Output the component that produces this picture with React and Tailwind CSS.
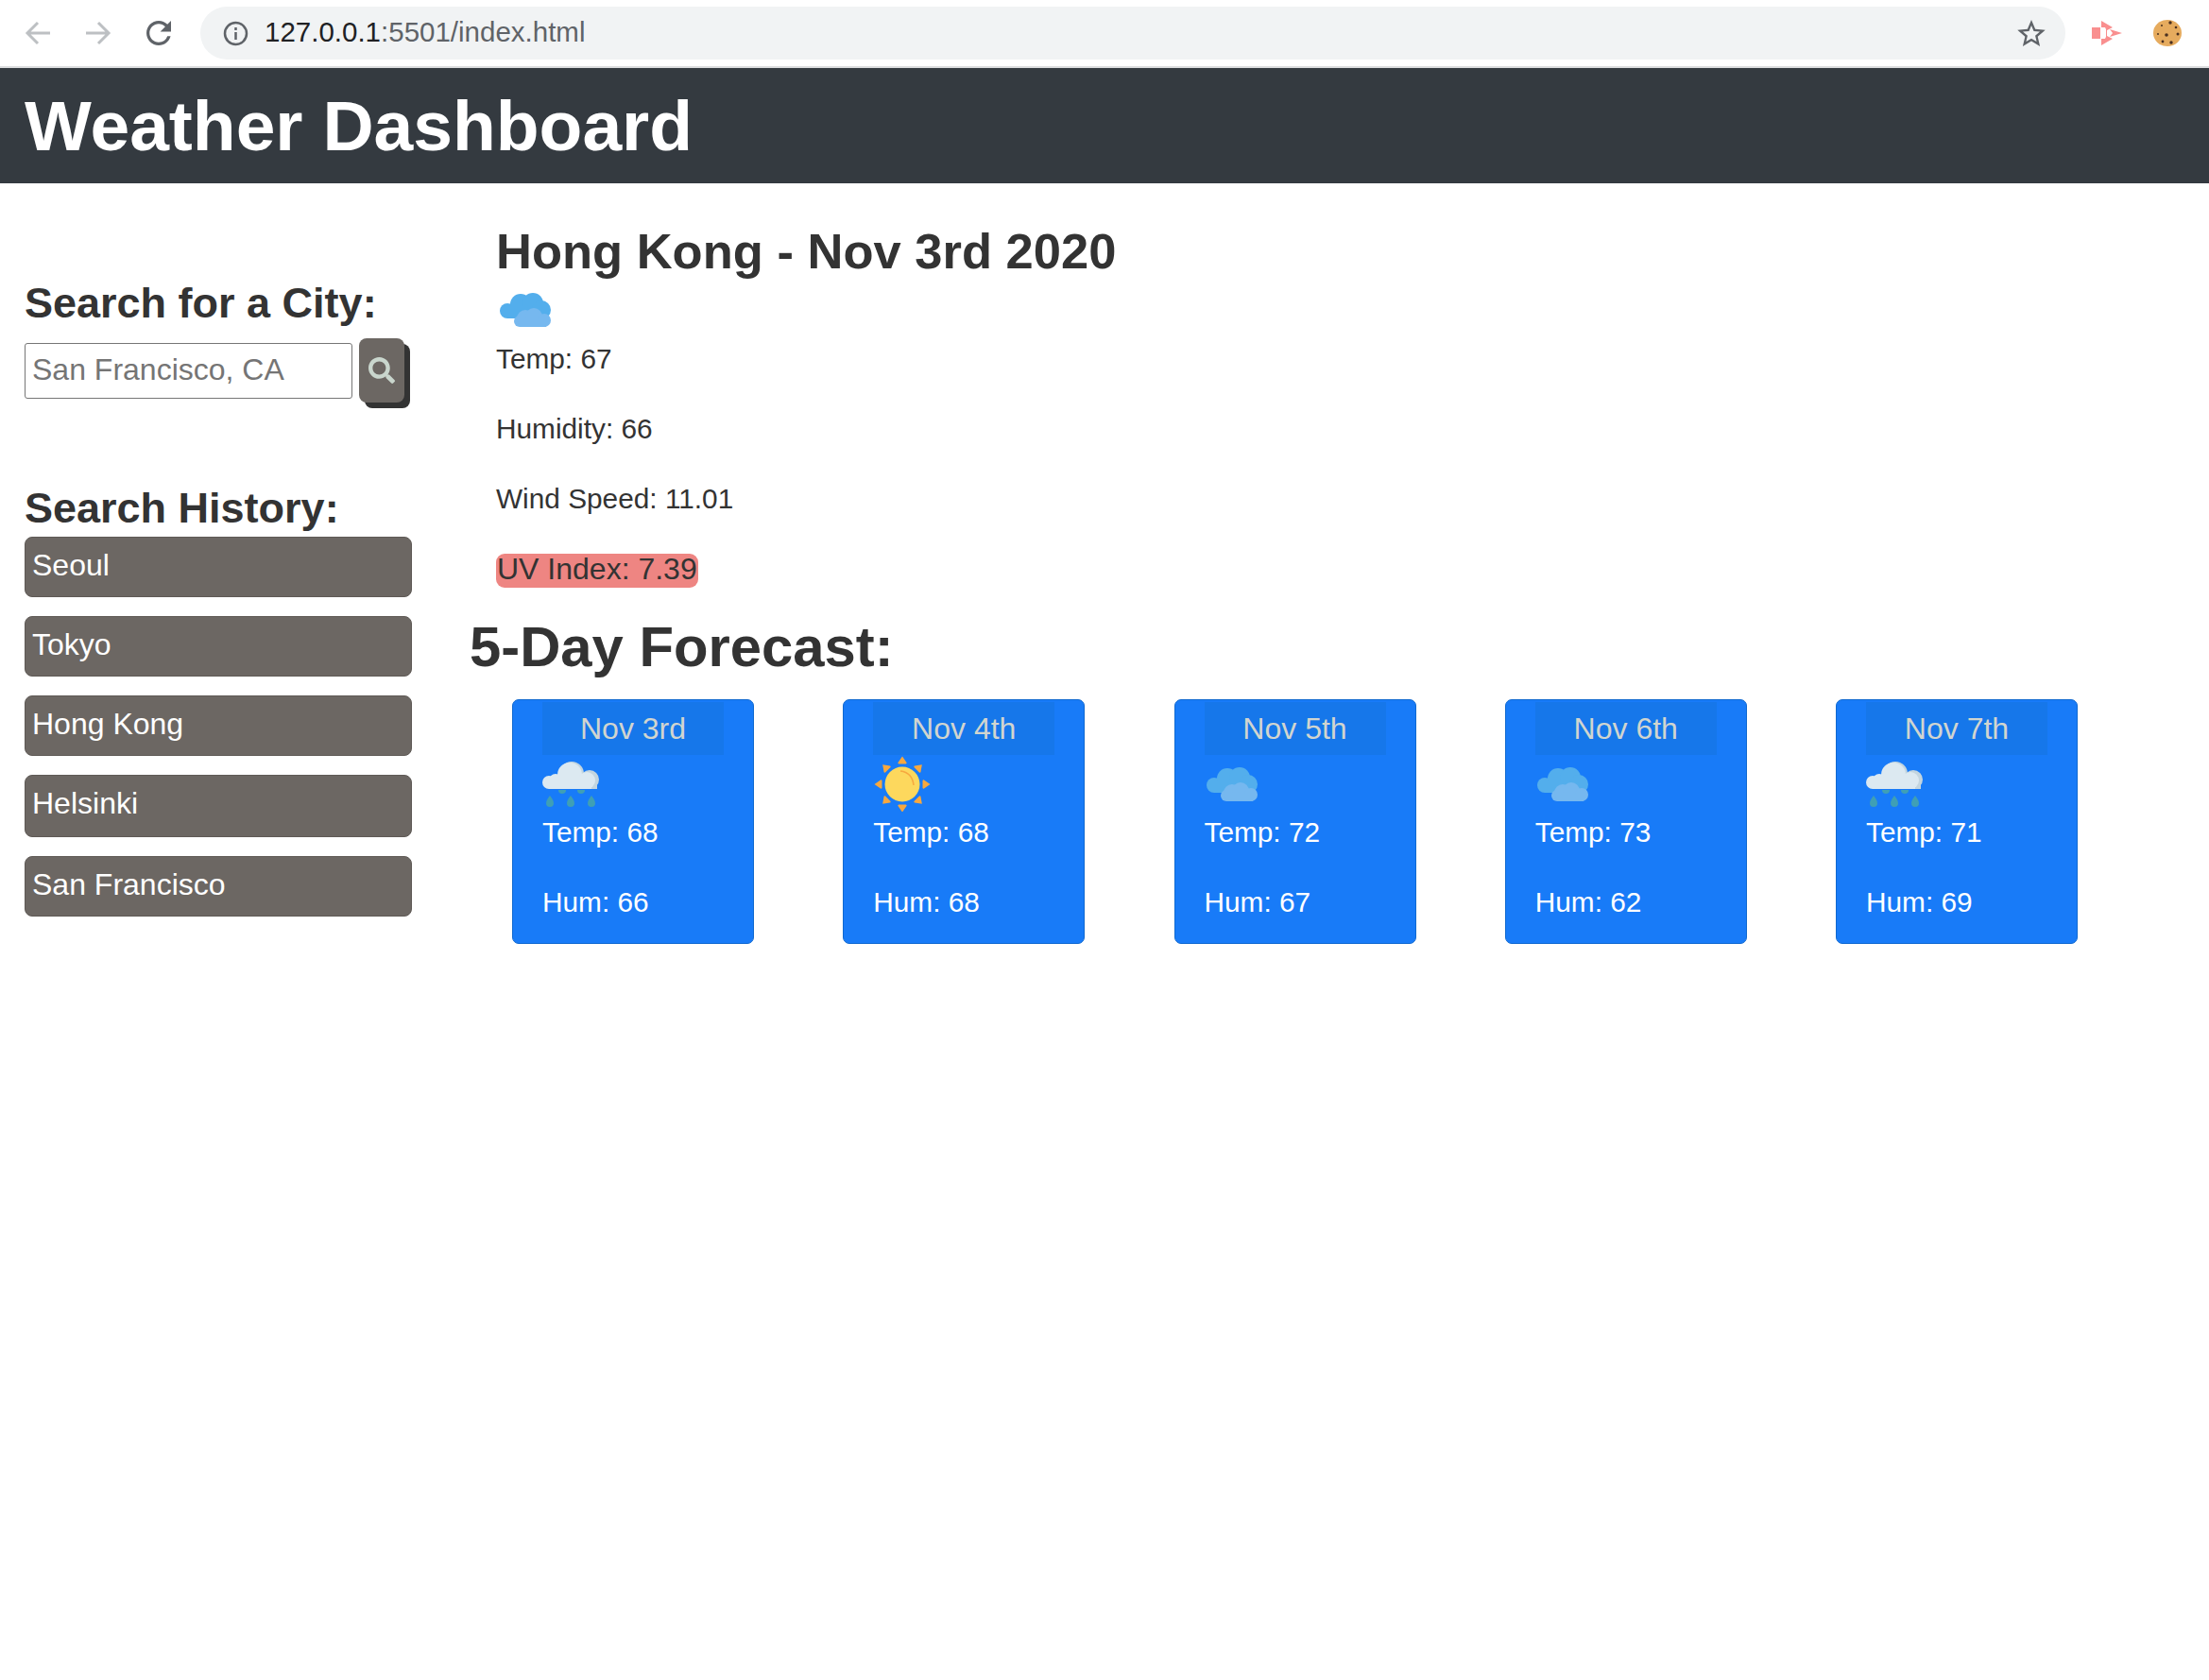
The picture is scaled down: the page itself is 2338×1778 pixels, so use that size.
import { FaSearch } from "react-icons/fa";

const history = [
  { name: "Seoul", size: "h-[64px] pb-[4px]" },
  { name: "Tokyo", size: "h-[64px] pb-[4px]" },
  { name: "Hong Kong", size: "h-[64px] pb-[4px]" },
  { name: "Helsinki", size: "h-[66px] pb-[7px]" },
  { name: "San Francisco", size: "h-[64px] pb-[4px]" },
];

const forecast = [
  { date: "Nov 3rd", icon: "rain", temp: 68, hum: 66 },
  { date: "Nov 4th", icon: "sun", temp: 68, hum: 68 },
  { date: "Nov 5th", icon: "clouds", temp: 72, hum: 67 },
  { date: "Nov 6th", icon: "clouds", temp: 73, hum: 62 },
  { date: "Nov 7th", icon: "rain", temp: 71, hum: 69 },
];

const CloudsIcon = ({ className }) => (
  <svg width="54" height="36" viewBox="0 0 54 36" className={className}>
    <g fill="#53aeec">
      <circle cx="8" cy="19" r="8" />
      <circle cx="22" cy="12" r="11" />
      <circle cx="35" cy="11" r="11" />
      <circle cx="44" cy="18" r="10" />
      <rect x="8" y="15" width="38" height="12" />
    </g>
    <g fill="#76b8ef">
      <circle cx="21" cy="30" r="6" />
      <circle cx="27" cy="27" r="9" />
      <circle cx="36" cy="25" r="9" />
      <circle cx="47" cy="29" r="7" />
      <rect x="21" y="28" width="28" height="8" />
    </g>
  </svg>
);

const RainIcon = () => (
  <svg width="62" height="60" viewBox="0 0 62 60" className="block">
    <g fill="#c3d5df">
      <circle cx="31" cy="20" r="13" />
      <circle cx="50" cy="26" r="10" />
      <rect x="8" y="26" width="50" height="10" />
    </g>
    <g fill="#dce9f1">
      <circle cx="29" cy="21" r="13" />
      <circle cx="47" cy="27" r="9" />
      <circle cx="7" cy="29" r="7" />
      <circle cx="14" cy="27" r="7" />
      <rect x="7" y="26" width="45" height="10" />
    </g>
    <g fill="#3f9fb5">
      <path d="M17 37h8a4 4 0 0 1-8 0z" />
      <path d="M37 37h8a4 4 0 0 1-8 0z" />
      <path d="M8 43c2 3 4 5 4 8a4 4 0 0 1-8 0c0-3 2-5 4-8z" />
      <path d="M30 43c2 3 4 5 4 8a4 4 0 0 1-8 0c0-3 2-5 4-8z" />
      <path d="M52 43c2 3 4 5 4 8a4 4 0 0 1-8 0c0-3 2-5 4-8z" />
    </g>
  </svg>
);

const SunIcon = () => (
  <svg width="62" height="60" viewBox="0 0 62 60" className="block">
    <g fill="#f7a83f">
      {[0, 45, 90, 135, 180, 225, 270, 315].map((deg) => (
        <path key={deg} d="M31 1.500l4.500 6.500a1 1 0 0 1-1 1.500h-7a1 1 0 0 1-1-1.500z" transform={`rotate(${deg} 31 31)`} />
      ))}
    </g>
    <circle cx="31" cy="31" r="18.500" fill="#fdd85d" />
    <path d="M29 17c8 1 13 6 14 15" fill="none" stroke="#f7a83f" strokeWidth="1.500" />
  </svg>
);

const WeatherIcon = ({ type }) => {
  if (type === "rain") return <RainIcon />;
  if (type === "sun") return <SunIcon />;
  return (
    <div className="pt-[13px] pl-[2px]">
      <CloudsIcon className="block" />
    </div>
  );
};

const BrowserBar = () => (
  <div className="flex h-[72px] items-center border-b-2 border-[#dcdddf] bg-white pl-[26px]">
    <svg width="27" height="26" viewBox="0 0 27 26" fill="none" stroke="#bdc0c3" strokeWidth="3">
      <path d="M27 13H3M14 2 3 13l11 11" />
    </svg>
    <svg width="27" height="26" viewBox="0 0 27 26" fill="none" stroke="#bdc0c3" strokeWidth="3" className="ml-[38px]">
      <path d="M0 13h24M13 2l11 11-11 11" />
    </svg>
    <svg width="26" height="26" viewBox="4 4 16 16" fill="#5f6368" className="ml-[37px]">
      <path d="M17.650 6.350A7.958 7.958 0 0 0 12 4c-4.420 0-7.990 3.580-7.990 8s3.570 8 7.990 8c3.730 0 6.840-2.550 7.730-6h-2.080A5.990 5.990 0 0 1 12 18c-3.310 0-6-2.690-6-6s2.690-6 6-6c1.660 0 3.140.690 4.220 1.780L13 11h7V4l-2.350 2.350z" />
    </svg>
    <div className="ml-[31px] flex h-[56px] w-[1974px] items-center rounded-full bg-[#f1f3f4] pl-[24px] pr-[21px]">
      <svg width="27" height="27" viewBox="0 0 27 27" fill="none" stroke="#5f6368" strokeWidth="2.500">
        <circle cx="13.500" cy="13.500" r="11.500" />
        <path d="M13.500 12v8M13.500 7v3" />
      </svg>
      <div className="ml-[17px] pb-[2px] text-[29.500px] leading-[40px] text-[#5f6368]">
        <span className="text-[#202124]">127.0.0.1</span>:5501/index.html
      </div>
      <svg width="30" height="28" viewBox="2 2 20 19" fill="#5f6368" className="ml-auto">
        <path d="M22 9.240l-7.190-.620L12 2 9.190 8.630 2 9.240l5.460 4.730L5.820 21 12 17.270 18.180 21l-1.630-7.030L22 9.240zM12 15.400l-3.760 2.270 1-4.280-3.320-2.880 4.380-.380L12 6.100l1.710 4.040 4.380.380-3.320 2.880 1 4.280L12 15.400z" />
      </svg>
    </div>
    <svg width="32" height="26" viewBox="0 0 32 26" fill="#f98f8f" className="ml-[28px]">
      <path d="M0 7h9v12H0zM10 0l12 7-6 3v6l6 3-12 7v-7h4l1-2v-8l-1-2h-4zM19 9l13 4-13 4 3-4z" />
    </svg>
    <svg width="30" height="28" viewBox="0 0 30 28" className="ml-[33px]">
      <ellipse cx="15" cy="14" rx="15" ry="14" fill="#e6ab5e" />
      <g fill="#4a3020">
        <circle cx="18" cy="3" r="1.700" />
        <circle cx="9" cy="6" r="1" />
        <circle cx="24" cy="8" r="1.300" />
        <circle cx="14" cy="16" r="1.800" />
        <circle cx="5" cy="15" r="1" />
        <circle cx="26" cy="15" r="1.500" />
        <circle cx="10" cy="23" r="1.400" />
        <circle cx="19" cy="24" r="1.700" />
      </g>
    </svg>
  </div>
);

const Sidebar = () => (
  <aside className="w-[497px] shrink-0 pl-[26px] pr-[61px] pt-[101px]">
    <h2 className="text-[45px] font-bold leading-[52px] text-[#333]">Search for a City:</h2>
    <div className="mt-[11px] flex items-center gap-[7px]">
      <input
        placeholder="San Francisco, CA"
        className="h-[59px] w-[347px] rounded-[3px] border border-[#767676] bg-white pb-[2px] pl-[7px] text-[32px] text-[#333] placeholder:text-[#757575]"
      />
      <button className="flex h-[68px] w-[48px] items-center justify-center rounded-[8px] bg-[#6c6763] text-[#c9d6cd] shadow-[6px_6px_0_#333]">
        <FaSearch size={28} />
      </button>
    </div>
    <h2 className="mt-[86px] text-[45px] font-bold leading-[52px] text-[#333]">Search History:</h2>
    <div className="mt-[4px] flex flex-col gap-[20px]">
      {history.map((city) => (
        <button
          key={city.name}
          className={`flex ${city.size} w-full items-center rounded-[8px] border border-[#5f5a56] bg-[#6c6763] pl-[7px] text-[32px] text-white`}
        >
          {city.name}
        </button>
      ))}
    </div>
  </aside>
);

const ForecastCard = ({ day }) => (
  <div className="h-[259px] w-[256px] rounded-[7px] border border-[#1069d0] bg-[#187bf8] px-[31px] pt-[2px] text-white">
    <div className="h-[56px] bg-[#1677ea] text-center text-[32px] leading-[56px] text-[#d1d5cf]">{day.date}</div>
    <div className="h-[60px]">
      <WeatherIcon type={day.icon} />
    </div>
    <p className="mb-[30px] text-[29.800px] leading-[44px]">Temp: {day.temp}</p>
    <p className="text-[29.800px] leading-[44px]">Hum: {day.hum}</p>
  </div>
);

export default function App() {
  return (
    <div className="min-h-screen bg-white font-['Liberation_Sans',sans-serif] text-[#333]">
      <BrowserBar />
      <header className="flex h-[122px] items-center bg-[#343a40] pl-[26px]">
        <h1 className="text-[75px] font-bold leading-[90px] text-white">Weather Dashboard</h1>
      </header>
      <div className="flex">
        <Sidebar />
        <main className="flex-1 pt-[41px]">
          <section className="pl-[28px]">
            <h2 className="text-[52.500px] font-bold leading-[62px]">Hong Kong - Nov 3rd 2020</h2>
            <CloudsIcon className="mt-[13px] ml-[4px] block" />
            <p className="mt-[12px] mb-[30px] text-[29.800px] leading-[44px]">Temp: 67</p>
            <p className="mb-[30px] text-[29.800px] leading-[44px]">Humidity: 66</p>
            <p className="text-[29.800px] leading-[44px]">Wind Speed: 11.01</p>
            <div className="mt-[36px] h-[36px]">
              <span className="inline-block h-[36px] rounded-[9px] bg-[#ee8582] px-[1px] text-[32px] leading-[33px]">UV Index: 7.39</span>
            </div>
          </section>
          <h2 className="mt-[28px] text-[59.800px] font-bold leading-[70px]">5-Day Forecast:</h2>
          <div className="ml-[45px] mt-[20px] flex w-[1657px] justify-between">
            {forecast.map((day) => (
              <ForecastCard key={day.date} day={day} />
            ))}
          </div>
        </main>
      </div>
    </div>
  );
}
